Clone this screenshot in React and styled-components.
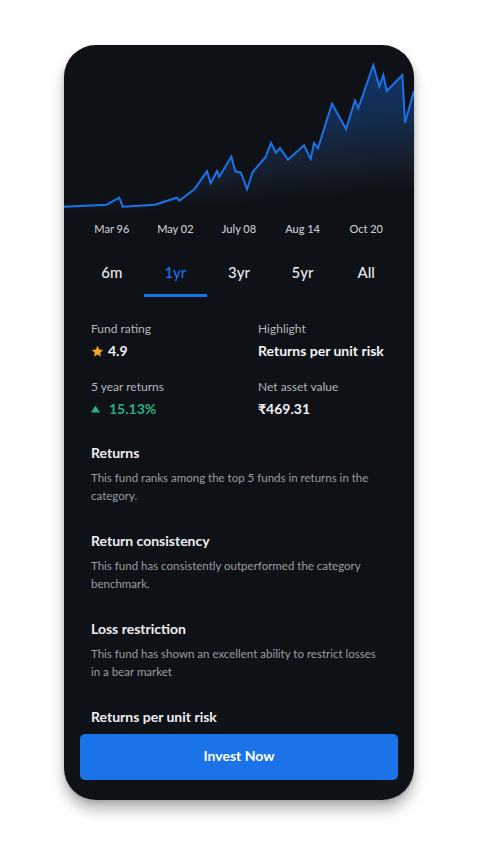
import styled, { createGlobalStyle } from 'styled-components';

const GlobalStyle = createGlobalStyle`
  html, body {
    margin: 0;
    padding: 0;
    background: #ffffff;
    font-family: 'Lato', 'Liberation Sans', sans-serif;
  }
  * { box-sizing: border-box; }
`;

const points = [
  [0, 161.7], [42.7, 159.7], [55.3, 152.7], [58.7, 161.7], [91, 159.7], [112.7, 152.7],
  [115.3, 155.7], [130.3, 144.3], [143, 126.3], [146.7, 138.3], [153, 126], [155.3, 131.7],
  [167.3, 111.7], [171.3, 126.3], [177, 127.7], [183, 144.3], [188.7, 127], [201.7, 112],
  [207, 98], [212, 107.7], [216, 103], [224, 114.7], [240, 100.3], [246.7, 114], [250, 98],
  [254, 103.3], [268, 58.7], [282, 84], [291, 55.7], [294.3, 63.3], [309.3, 20], [315.3, 41.7],
  [319.3, 30], [322.7, 46], [338.3, 30], [341, 77.7], [350, 46],
];

const dates = ['Mar 96', 'May 02', 'July 08', 'Aug 14', 'Oct 20'];
const ranges = ['6m', '1yr', '3yr', '5yr', 'All'];

const sections = [
  { title: 'Returns', lines: ['This fund ranks among the top 5 funds in returns in the', 'category.'] },
  { title: 'Return consistency', lines: ['This fund has consistently outperformed the category', 'benchmark.'] },
  { title: 'Loss restriction', lines: ['This fund has shown an excellent ability to restrict losses', 'in a bear market'] },
  { title: 'Returns per unit risk', lines: [] },
];

function Chart() {
  const line = points.map((p) => p.join(',')).join(' ');
  const area = `0,170 ${line} 350,170`;
  return (
    <ChartSvg viewBox="0 0 350 170" width="350" height="170">
      <defs>
        <linearGradient id="fill" x1="0" y1="0" x2="0.2" y2="1">
          <stop offset="0" stopColor="#0f3a78" stopOpacity="0.95" />
          <stop offset="0.5" stopColor="#15345f" stopOpacity="0.8" />
          <stop offset="0.8" stopColor="#1c2a40" stopOpacity="0.55" />
          <stop offset="1" stopColor="#1b2333" stopOpacity="0" />
        </linearGradient>
      </defs>
      <polygon points={area} fill="url(#fill)" />
      <polyline points={line} fill="none" stroke="#1a73e8" strokeWidth="2" strokeLinejoin="miter" />
    </ChartSvg>
  );
}

export default function App() {
  return (
    <Page>
      <GlobalStyle />
      <Phone>
        <Chart />
        <DateRow>
          {dates.map((d) => (
            <DateLabel key={d}>{d}</DateLabel>
          ))}
        </DateRow>
        <TabRow>
          {ranges.map((r) => (
            <Tab key={r} active={r === '1yr'}>{r}</Tab>
          ))}
        </TabRow>
        <Stats>
          <Stat>
            <StatLabel>Fund rating</StatLabel>
            <StatValue>
              <svg width="13" height="13" viewBox="0 0 24 24">
                <path fill="#f5a623" d="M12 1.5l3.1 6.9 7.4.7-5.6 5 1.7 7.4L12 17.6l-6.6 3.9 1.7-7.4-5.6-5 7.4-.7z" />
              </svg>
              4.9
            </StatValue>
          </Stat>
          <Stat>
            <StatLabel>Highlight</StatLabel>
            <StatValue>Returns per unit risk</StatValue>
          </Stat>
          <Stat>
            <StatLabel>5 year returns</StatLabel>
            <StatValue green>
              <svg width="9" height="8" viewBox="0 0 10 8">
                <path fill="#2bb07f" d="M5 0l5 8H0z" />
              </svg>
              <span style={{ marginLeft: 5 }}>15.13%</span>
            </StatValue>
          </Stat>
          <Stat>
            <StatLabel>Net asset value</StatLabel>
            <StatValue>₹469.31</StatValue>
          </Stat>
        </Stats>
        <Sections>
          {sections.map((s) => (
            <Section key={s.title}>
              <SectionTitle>{s.title}</SectionTitle>
              {s.lines.length > 0 && (
                <SectionText>
                  {s.lines[0]}
                  <br />
                  {s.lines[1]}
                </SectionText>
              )}
            </Section>
          ))}
        </Sections>
        <InvestButton type="button">Invest Now</InvestButton>
      </Phone>
    </Page>
  );
}

const Page = styled.div`
  padding: 45px 0 40px 64px;
`;

const Phone = styled.div`
  position: relative;
  width: 350px;
  height: 755px;
  border-radius: 32px;
  background: #0e1116;
  overflow: hidden;
  box-shadow: 0 10px 14px rgba(0, 0, 0, 0.28), 0 2px 4px rgba(0, 0, 0, 0.15);
  display: flex;
  flex-direction: column;
`;

const ChartSvg = styled.svg`
  display: block;
  flex-shrink: 0;
`;

const DateRow = styled.div`
  display: grid;
  grid-template-columns: repeat(5, 1fr);
  padding: 0 16px;
  height: 26px;
  align-items: center;
`;

const DateLabel = styled.span`
  text-align: center;
  font-size: 11px;
  font-weight: 500;
  color: #c9ccd1;
`;

const TabRow = styled.div`
  display: grid;
  grid-template-columns: repeat(5, 1fr);
  padding: 0 16px;
  margin-top: 10px;
`;

const Tab = styled.button`
  all: unset;
  box-sizing: border-box;
  height: 46px;
  padding-bottom: 2px;
  text-align: center;
  font-size: 15px;
  font-weight: 500;
  color: ${(p) => (p.active ? '#1a73e8' : '#e8e9eb')};
  border-bottom: 3px solid ${(p) => (p.active ? '#1a73e8' : 'transparent')};
  display: flex;
  align-items: center;
  justify-content: center;
  cursor: pointer;
`;

const Stats = styled.div`
  display: grid;
  grid-template-columns: 167px 1fr;
  row-gap: 18px;
  padding: 0 27px;
  margin-top: 24px;
`;

const Stat = styled.div`
  display: flex;
  flex-direction: column;
  gap: 4px;
`;

const StatLabel = styled.span`
  font-size: 12px;
  line-height: 16px;
  color: #b3b6bc;
`;

const StatValue = styled.span`
  display: flex;
  align-items: center;
  gap: 4px;
  font-size: 14px;
  line-height: 20px;
  font-weight: 700;
  color: ${(p) => (p.green ? '#2bb07f' : '#f2f3f5')};
`;

const Sections = styled.div`
  display: flex;
  flex-direction: column;
  gap: 26px;
  padding: 0 27px;
  margin-top: 24px;
`;

const Section = styled.div`
  display: flex;
  flex-direction: column;
  gap: 6px;
`;

const SectionTitle = styled.h3`
  margin: 0;
  font-size: 14px;
  line-height: 20px;
  font-weight: 700;
  color: #eeeff1;
`;

const SectionText = styled.p`
  margin: 0;
  font-size: 11.5px;
  line-height: 18px;
  font-weight: 400;
  color: #9a9da3;
  white-space: nowrap;
`;

const InvestButton = styled.button`
  all: unset;
  box-sizing: border-box;
  position: absolute;
  left: 16px;
  right: 16px;
  bottom: 20px;
  height: 46px;
  padding-bottom: 3px;
  border-radius: 5px;
  background: #1a73e8;
  color: #ffffff;
  font-family: 'Lato', 'Liberation Sans', sans-serif;
  font-size: 14px;
  font-weight: 700;
  display: flex;
  align-items: center;
  justify-content: center;
  cursor: pointer;
`;
